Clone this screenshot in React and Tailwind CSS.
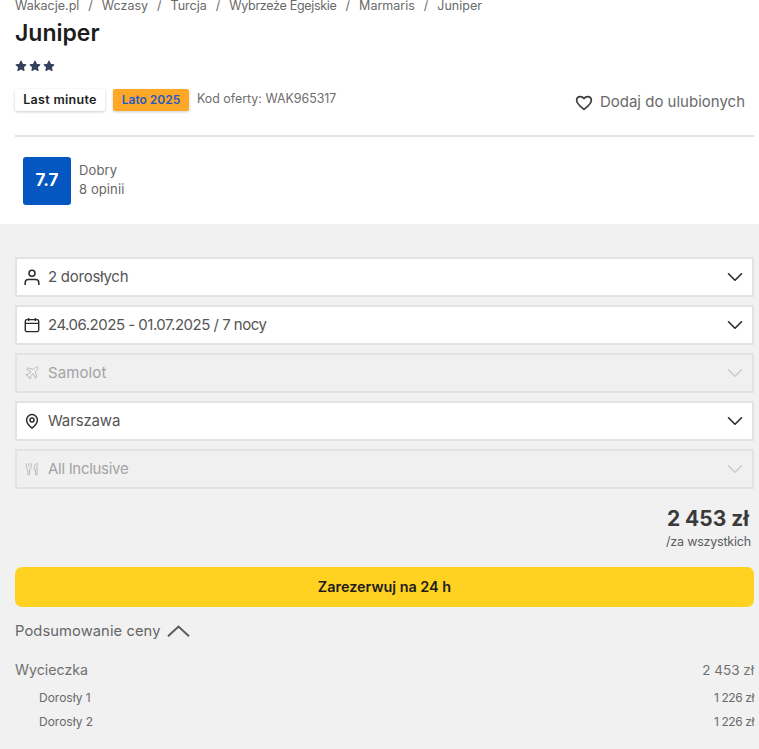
import React from "react";
import { ChevronDown } from "lucide-react";

const F = "font-['Inter','Liberation_Sans',sans-serif]";

const UserIcon = () => (
  <svg width="16" height="17" viewBox="0 0 16 17" fill="none" stroke="#2a2a2a" strokeWidth="1.5">
    <circle cx="8" cy="4.200" r="3" />
    <path d="M1.200 16v-2.400c0-2 1.400-3.200 3.200-3.200h7.200c1.800 0 3.200 1.200 3.200 3.200V16" />
  </svg>
);
const CalIcon = () => (
  <svg width="16" height="16" viewBox="0 0 16 16" fill="none" stroke="#2a2a2a" strokeWidth="1.4">
    <rect x="1.300" y="2.600" width="13.400" height="12" rx="1.600" />
    <path d="M1.300 6.400h13.400M4.600 1v3M11.400 1v3" />
  </svg>
);
const PlaneIcon = () => (
  <svg width="14" height="14" viewBox="0 0 16 16" fill="none" stroke="#b8b8b8" strokeWidth="1.1" strokeLinejoin="round">
    <path d="M14.600 1.400c-1-.8-2.400-.3-3.400.7L9.400 3.900 3 2.200 1.600 3.600 6.800 6.500 4.400 9.400 2.200 9 1 10.200l3 1.600 1.600 3 1.200-1.200-.4-2.200 2.900-2.400 2.900 5.200 1.400-1.400-1.700-6.400 1.800-1.800c1-1 1.500-2.400.9-3.200z" />
  </svg>
);
const PinIcon = () => (
  <svg width="16" height="16" viewBox="0 0 16 16" fill="none" stroke="#2a2a2a" strokeWidth="1.500">
    <path d="M8 15.200c-1.200-1.100-5.400-4.300-5.400-8.200a5.400 5.400 0 0 1 10.800 0c0 3.900-4.200 7.100-5.400 8.200z" />
    <circle cx="8" cy="7" r="2" />
  </svg>
);
const ForkIcon = () => (
  <svg width="14" height="14" viewBox="0 0 16 16" fill="none" stroke="#b8b8b8" strokeWidth="1.100">
    <path d="M1.500 1.500v4c0 1.600 1 2.600 1.800 3v6h2v-6c.8-.4 1.800-1.400 1.800-3v-4M4.300 1.500v4" />
    <path d="M13.800 1.500c-2 .4-3.200 2.400-3.200 5v2.200h1.400v5.800h1.800z" />
  </svg>
);
const Star = () => (
  <svg width="12" height="12" viewBox="0 0 24 24" fill="#33415c" stroke="#33415c" strokeWidth="2.500" strokeLinejoin="round">
    <path d="M12 2.500l2.900 6.200 6.600.8-4.900 4.600 1.300 6.700L12 17.500l-5.900 3.300 1.300-6.700-4.900-4.600 6.600-.8z" />
  </svg>
);
const Heart = () => (
  <svg width="18" height="18" viewBox="0 0 24 24" fill="none" stroke="#3c3c3c" strokeWidth="2.200" strokeLinejoin="round">
    <path d="M12 20.600C8 17.400 2.200 13.400 2.200 8.400 2.200 5.400 4.500 3.400 7.200 3.400c2 0 3.700 1 4.800 2.800 1.100-1.800 2.800-2.800 4.800-2.800 2.700 0 5 2 5 5 0 5-5.800 9-9.800 12.200z" />
  </svg>
);

function Row({ icon, label, disabled, track }) {
  return (
    <div
      className={`flex h-10 items-center rounded-[1px] border-2 border-[#e2e2e2] pl-[7px] pr-[4px] ${
        disabled ? "bg-[#f0f0f0]" : "bg-white"
      }`}
    >
      <span className="flex w-4 justify-center">{icon}</span>
      <span className={`ml-[8px] flex-1 text-[15px] ${track} ${disabled ? "text-[#a3a3a3]" : "text-[#555555]"}`}>
        {label}
      </span>
      <ChevronDown
        size={26}
        strokeWidth={disabled ? 1.100 : 1.500}
        className={disabled ? "text-[#c8c8c8]" : "text-[#2a2a2a]"}
      />
    </div>
  );
}

function Crumb({ items }) {
  return (
    <nav className="flex h-[11px] items-center gap-[9px] text-[12.5px] leading-[11px] text-[#6a6a6a]">
      {items.map((t, i) => (
        <React.Fragment key={t}>
          {i > 0 && <span>/</span>}
          <span className={t === "Wybrzeże Egejskie" ? "tracking-[-0.3px]" : ""}>{t}</span>
        </React.Fragment>
      ))}
    </nav>
  );
}

function SubRow({ label, value, top }) {
  return (
    <div className={`${top} flex items-center justify-between pl-6 text-[12px] leading-[17px] text-[#6a6a6a]`}>
      <span>{label}</span>
      <span className="tracking-[-0.4px]">{value}</span>
    </div>
  );
}

export default function App() {
  return (
    <div className={`${F} h-[749px] w-[759px] overflow-hidden bg-[#f1f1f1]`}>
      <section className="h-[224px] bg-white pl-[15px] pr-[5px]">
        <Crumb items={["Wakacje.pl", "Wczasy", "Turcja", "Wybrzeże Egejskie", "Marmaris", "Juniper"]} />
        <h1 className="mt-[9px] text-[23px] font-semibold leading-[26px] text-[#1d1d1d]">Juniper</h1>
        <div className="mt-[14px] flex gap-[2px]">
          <Star />
          <Star />
          <Star />
        </div>
        <div className="mt-[16px] flex h-[23px] items-center justify-between">
          <div className="flex items-center">
            <span className="flex h-[22px] w-[90px] items-center justify-center rounded-[2px] bg-white pt-[1px] text-[12.5px] font-semibold tracking-[0.3px] text-[#1c1c1c] shadow-[0_1px_3px_rgba(0,0,0,0.2)]">
              Last minute
            </span>
            <span className="ml-2 flex h-[22px] w-[76px] items-center justify-center rounded-[2px] bg-[#ffa726] text-[12px] font-semibold text-[#1e5bc6] shadow-[0_1px_3px_rgba(0,0,0,0.2)]">
              Lato 2025
            </span>
            <span className="ml-2 text-[12.4px] text-[#6d6d6d]">Kod oferty: WAK965317</span>
          </div>
          <div className="mr-[9px] mt-[6px] flex items-center gap-[7px]">
            <Heart />
            <span className="text-[15px] text-[#6a6a6a]">Dodaj do ulubionych</span>
          </div>
        </div>
        <div className="mt-[24px] h-[2px] bg-[#e3e3e3]" />
        <div className="mt-5 flex items-center pl-2">
          <div className="flex h-12 w-12 items-center justify-center rounded-[3px] bg-[#0456c1] text-[17px] font-bold text-white">
            7.7
          </div>
          <div className="ml-2 pb-[2px] text-[13px] leading-[19px] tracking-[0.1px] text-[#666666]">
            <div>Dobry</div>
            <div>8 opinii</div>
          </div>
        </div>
      </section>

      <section className="pl-[15px] pr-[5px] pt-[33px]">
        <div className="flex flex-col gap-2">
          <Row icon={<UserIcon />} label="2 dorosłych" track="tracking-[-0.26px]" />
          <Row icon={<CalIcon />} label="24.06.2025 - 01.07.2025 / 7 nocy" track="tracking-[-0.5px]" />
          <Row icon={<PlaneIcon />} label="Samolot" track="tracking-[0.1px]" disabled />
          <Row icon={<PinIcon />} label="Warszawa" track="tracking-[-0.15px]" />
          <Row icon={<ForkIcon />} label="All Inclusive" track="tracking-[-0.3px]" disabled />
        </div>

        <div className="mt-[15px] pr-[3px] text-right">
          <div className="pr-[2px] text-[21px] font-bold leading-[29px] text-[#3a3a3a]">2 453 zł</div>
          <div className="text-[12.5px] leading-[18px] tracking-[-0.2px] text-[#5c5c5c]">/za wszystkich</div>
        </div>

        <button className="mt-[16px] flex h-10 w-full items-center justify-center rounded-[7px] bg-[#ffd121] pb-[1px] text-[14.4px] font-semibold text-[#1d1d1d]">
          Zarezerwuj na 24 h
        </button>

        <div className="mt-[14px] flex h-[20px] items-center gap-[6px]">
          <span className="text-[14.7px] tracking-[0.1px] text-[#666666]">Podsumowanie ceny</span>
          <svg width="23" height="12" viewBox="0 0 23 12" fill="none" stroke="#5a5a5a" strokeWidth="2">
            <path d="M1 11.200 11.500 1.500 22 11.200" />
          </svg>
        </div>

        <div className="mt-[19px] flex items-center justify-between leading-[20px] text-[#707070]">
          <span className="text-[14.2px]">Wycieczka</span>
          <span className="text-[13.500px]">2 453 zł</span>
        </div>
        <SubRow label="Dorosły 1" value="1 226 zł" top="mt-[9px]" />
        <SubRow label="Dorosły 2" value="1 226 zł" top="mt-[7px]" />
      </section>
    </div>
  );
}
